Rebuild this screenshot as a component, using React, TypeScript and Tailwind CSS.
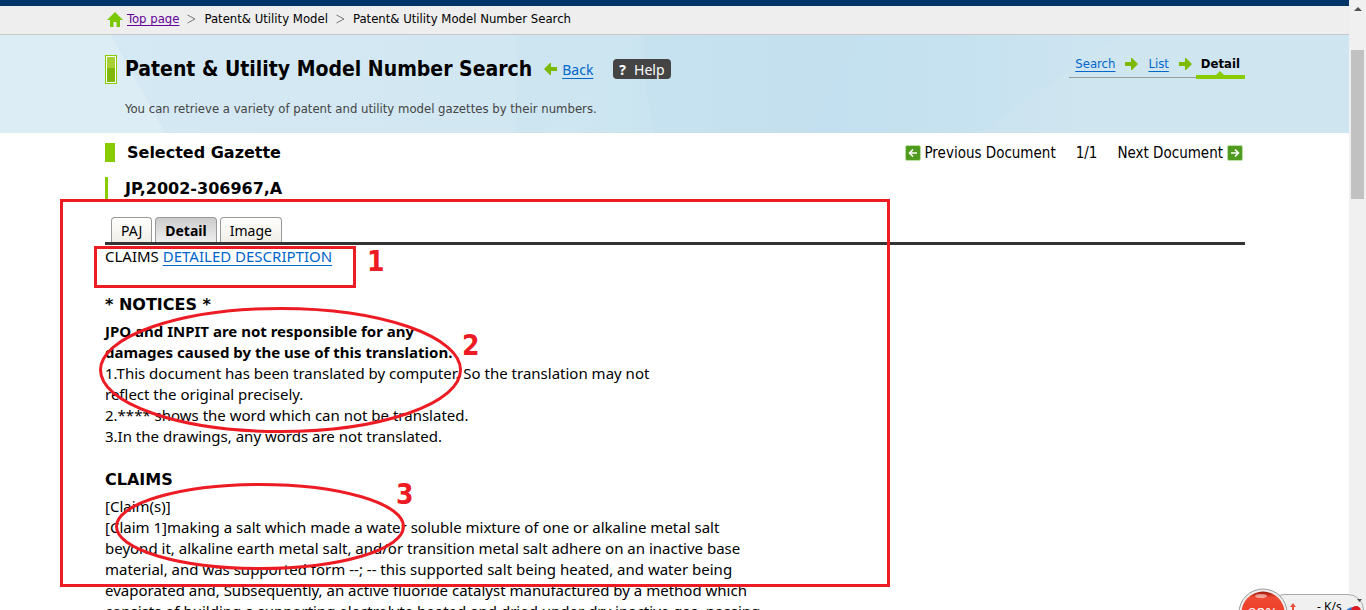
import React from 'react';

const tabs = ['PAJ', 'Detail', 'Image'];

const claimLines = [
  '[Claim(s)]',
  '[Claim 1]making a salt which made a water soluble mixture of one or alkaline metal salt',
  'beyond it, alkaline earth metal salt, and/or transition metal salt adhere on an inactive base',
  'material, and was supported form --; -- this supported salt being heated, and water being',
  'evaporated and, Subsequently, an active fluoride catalyst manufactured by a method which',
  'consists of building a supporting electrolyte heated and dried under dry inactive gas, passing',
];

const Arrow: React.FC<{ left?: boolean }> = ({ left }) => (
  <svg className="shrink-0" width="13" height="12" viewBox="0 0 13 12">
    <path
      d="M0 4h6V0h1l6 6-6 6H6V8H0z"
      fill="#7cba00"
      transform={left ? 'matrix(-1 0 0 1 13 0)' : undefined}
    />
  </svg>
);

const DocArrow: React.FC<{ left?: boolean }> = ({ left }) => (
  <svg className="shrink-0" width="16" height="16" viewBox="0 0 16 16">
    <rect x="0.5" y="0.5" width="15" height="15" rx="1.5" fill="#4f9a1f" stroke="#b9e2a2" />
    <path
      d="M4 8h7.500M8 4.5 11.500 8 8 11.500"
      fill="none"
      stroke="#fff"
      strokeWidth="1.6"
      transform={left ? 'matrix(-1 0 0 1 16 0)' : undefined}
    />
  </svg>
);

const Separator: React.FC = () => (
  <svg className="mx-2" width="9" height="10" viewBox="0 0 9 10">
    <path d="M0.500 1 8 5 0.500 9" fill="none" stroke="#777" />
  </svg>
);

const Breadcrumb: React.FC = () => (
  <nav className="border-t-6 border-b border-t-[#003366] border-b-[#c8c8c8] bg-[#eeeeee] px-[105px]">
    <div className="flex h-7 items-center pb-0.5 font-['DejaVu_Sans_Condensed','DejaVu_Sans',sans-serif] text-[13px]">
      <svg className="mr-1 ml-0.5" width="16" height="15" viewBox="0 0 16 15">
        <path d="M8 0l8 8h-3v7H9.500v-5h-3v5H3V8H0z" fill="#7cc800" />
      </svg>
      <a href="#" className="text-[#660099] underline underline-offset-2">Top page</a>
      <Separator />
      <span>Patent&amp; Utility Model</span>
      <Separator />
      <span>Patent&amp; Utility Model Number Search</span>
    </div>
  </nav>
);

const PageHeader: React.FC = () => (
  <header className="relative h-[98px] bg-[#cde5f1] pr-[104px] pl-[105px]">
    <svg className="absolute inset-0 h-full w-full" viewBox="0 0 1349 98" preserveAspectRatio="none">
      <defs>
        <linearGradient id="sky">
          <stop offset="0" stopColor="#d6e9f4" />
          <stop offset="0.38" stopColor="#d1e7f2" />
          <stop offset="0.5" stopColor="#c8e4f0" />
          <stop offset="0.6" stopColor="#c3e0f0" />
          <stop offset="0.72" stopColor="#c6e2f0" />
          <stop offset="0.8" stopColor="#cde4f1" />
          <stop offset="1" stopColor="#cde5f0" />
        </linearGradient>
      </defs>
      <rect width="1349" height="98" fill="url(#sky)" />
      <path d="M0 0h111l54 98H0z" fill="#dcedf6" />
      <path d="M517 0h125l-100 98h-26z" fill="#cde5f1" />
      <path d="M644 0h220q-40 50-50 98H655q-12-48-11-98z" fill="#c4e0ef" opacity="0.6" />
      <path d="M1120 0h229v98H980z" fill="#d1e6f1" opacity="0.4" />
    </svg>
    <div className="relative flex items-start justify-between">
      <div>
        <div className="flex h-[68px] items-center">
          <span className="h-[29px] w-3 border border-[#8c0] bg-[linear-gradient(#a6d033_0_45%,#80b90c_45%)] outline-1 -outline-offset-2 outline-white" />
          <h1 className="mt-0.5 ml-2 font-['DejaVu_Sans_Condensed','DejaVu_Sans',sans-serif] text-[21px] font-bold">
            Patent &amp; Utility Model Number Search
          </h1>
          <span className="ml-3"><Arrow left /></span>
          <a href="#" className="ml-[5px] text-[14px] text-[#06c] underline underline-offset-3">Back</a>
          <button className="ml-5 flex h-5 items-center gap-2 rounded bg-[#444] px-1.5 text-[14px] text-white">
            <b>?</b>Help
          </button>
        </div>
        <p className="-mt-1 ml-5 font-['DejaVu_Sans_Condensed','DejaVu_Sans',sans-serif] text-[13px] text-[#444]">
          You can retrieve a variety of patent and utility model gazettes by their numbers.
        </p>
      </div>
      <ol className="mt-[17px] flex font-['DejaVu_Sans_Condensed','DejaVu_Sans',sans-serif] text-[13px]">
        <li className="flex h-[26px] items-center gap-2.5 border-b border-[#999] pr-1 pb-0.5 pl-1.5">
          <a href="#" className="text-[#06c] underline underline-offset-3">Search</a>
          <Arrow />
          <a href="#" className="text-[#06c] underline underline-offset-3">List</a>
          <Arrow />
        </li>
        <li className="relative flex h-[27px] items-center border-b-4 border-[#8c0] px-[5px] font-bold">
          Detail
          <span className="absolute bottom-0 left-5 border-x-4 border-b-4 border-x-transparent border-b-[#8c0]" />
        </li>
      </ol>
    </div>
  </header>
);

const DocumentView: React.FC = () => (
  <main className="pr-[104px] pl-[105px] text-[15px] leading-[21px]">
    <div className="flex h-[38px] items-center justify-between">
      <h2 className="flex items-center font-['DejaVu_Sans',sans-serif] text-[16px] font-bold">
        <span className="mr-3 h-[19px] w-2.5 bg-[#8c0]" />
        Selected Gazette
      </h2>
      <div className="mt-0.5 mr-0.5 flex items-center gap-5 font-['DejaVu_Sans_Condensed','DejaVu_Sans',sans-serif] text-[15px]">
        <button className="flex items-center gap-1"><DocArrow left />Previous Document</button>
        <span>1/1</span>
        <button className="flex items-center gap-1">Next Document<DocArrow /></button>
      </div>
    </div>
    <h3 className="mt-1.5 border-l-3 border-[#8c0] pl-[17px] font-['DejaVu_Sans',sans-serif] text-[16px] leading-6 font-bold">
      JP,2002-306967,A
    </h3>
    <div role="tablist" className="mt-4 flex gap-[3px] border-b-3 border-[#333] pl-1.5 text-[14px]">
      {tabs.map((tab) => (
        <button
          key={tab}
          role="tab"
          aria-selected={tab === 'Detail'}
          className={
            tab === 'Detail'
              ? 'h-[25px] rounded-t border border-b-0 border-[#999] bg-gradient-to-b from-[#ccc] to-[#eee] px-[9px] font-bold'
              : 'h-[25px] rounded-t border border-b-0 border-[#999] bg-gradient-to-b from-white to-[#f0eee6] px-[9px]'
          }
        >
          {tab}
        </button>
      ))}
    </div>
    <p className="mt-px">
      CLAIMS <a href="#" className="text-[#06c] underline underline-offset-3">DETAILED DESCRIPTION</a>
    </p>
    <h4 className="mt-[27px] font-['DejaVu_Sans',sans-serif] text-[16px] font-bold">* NOTICES *</h4>
    <p className="mt-1.5 font-bold">
      JPO and INPIT are not responsible for any<br />damages caused by the use of this translation.
    </p>
    <p>
      1.This document has been translated by computer. So the translation may not<br />
      reflect the original precisely.<br />
      2.**** shows the word which can not be translated.<br />
      3.In the drawings, any words are not translated.
    </p>
    <h4 className="mt-[22px] font-['DejaVu_Sans',sans-serif] text-[16px] font-bold">CLAIMS</h4>
    <div className="mt-1.5">
      {claimLines.map((line) => (
        <p key={line} className="whitespace-nowrap">{line}</p>
      ))}
    </div>
  </main>
);

const Annotations: React.FC = () => (
  <svg className="pointer-events-none absolute top-0 left-0" width="900" height="600">
    <g fill="none" stroke="#ed1c24" strokeWidth="3">
      <rect x="61.5" y="200.500" width="827" height="385" />
      <rect x="95.500" y="247.500" width="259" height="39" />
      <ellipse cx="280.500" cy="370" rx="180" ry="61.500" />
      <ellipse cx="260" cy="526.500" rx="143.500" ry="42" />
    </g>
    <g fill="#ed1c24" className="font-['DejaVu_Sans_Condensed','DejaVu_Sans',sans-serif] text-[28px] font-bold">
      <text x="367" y="271">1</text>
      <text x="462" y="355">2</text>
      <text x="396" y="504">3</text>
    </g>
  </svg>
);

const SpeedWidget: React.FC = () => (
  <div className="absolute right-0 bottom-0 h-[22px] w-[130px] overflow-hidden">
    <div className="absolute top-1.5 right-0.5 left-8 flex h-8 items-start rounded-full border border-[#aaa] bg-[#f0f0f0] text-[12px] leading-4">
      <svg className="mt-2 ml-5" width="8" height="12" viewBox="0 0 8 12">
        <path d="M4 0l3 4H5v8H3V4H1z" fill="#e8503a" />
      </svg>
      <span className="ml-5 pt-1">- K/s</span>
    </div>
    <svg className="absolute top-0 left-0" width="130" height="22" viewBox="0 0 130 22">
      <defs>
        <linearGradient id="ball" x2="0" y2="1">
          <stop offset="0" stopColor="#9c1407" />
          <stop offset="0.14" stopColor="#f04a34" />
          <stop offset="1" stopColor="#f02b18" />
        </linearGradient>
      </defs>
      <circle cx="27" cy="25" r="24" fill="#eee" stroke="#999" />
      <circle cx="27" cy="25" r="21.500" fill="url(#ball)" />
      <ellipse cx="25" cy="8" rx="6" ry="2" fill="#fff" opacity="0.5" />
      <circle cx="117" cy="28" r="9" fill="#3478d0" />
      <circle cx="120" cy="23" r="5" fill="#dd1b24" />
      <path d="M121 11h5l-2.500 3z" fill="#505050" />
    </svg>
    <span className="absolute top-3.5 left-3 text-[15px] leading-5 text-white">98%</span>
  </div>
);

const App: React.FC = () => (
  <div className="relative flex h-screen overflow-hidden bg-white font-['Noto_Sans',sans-serif] text-black">
    <div className="min-w-0 flex-1">
      <Breadcrumb />
      <PageHeader />
      <DocumentView />
    </div>
    {/* Scrollbar */}
    <div className="w-[17px] shrink-0 bg-[#f0f0f0] px-0.5">
      <svg className="mx-auto mt-[7px]" width="8" height="4" viewBox="0 0 8 4">
        <path d="M4 0l4 4H0z" fill="#505050" />
      </svg>
      <div className="mt-[39px] h-[149px] bg-[#c1c1c1]" />
    </div>
    <Annotations />
    <SpeedWidget />
  </div>
);

export default App;
